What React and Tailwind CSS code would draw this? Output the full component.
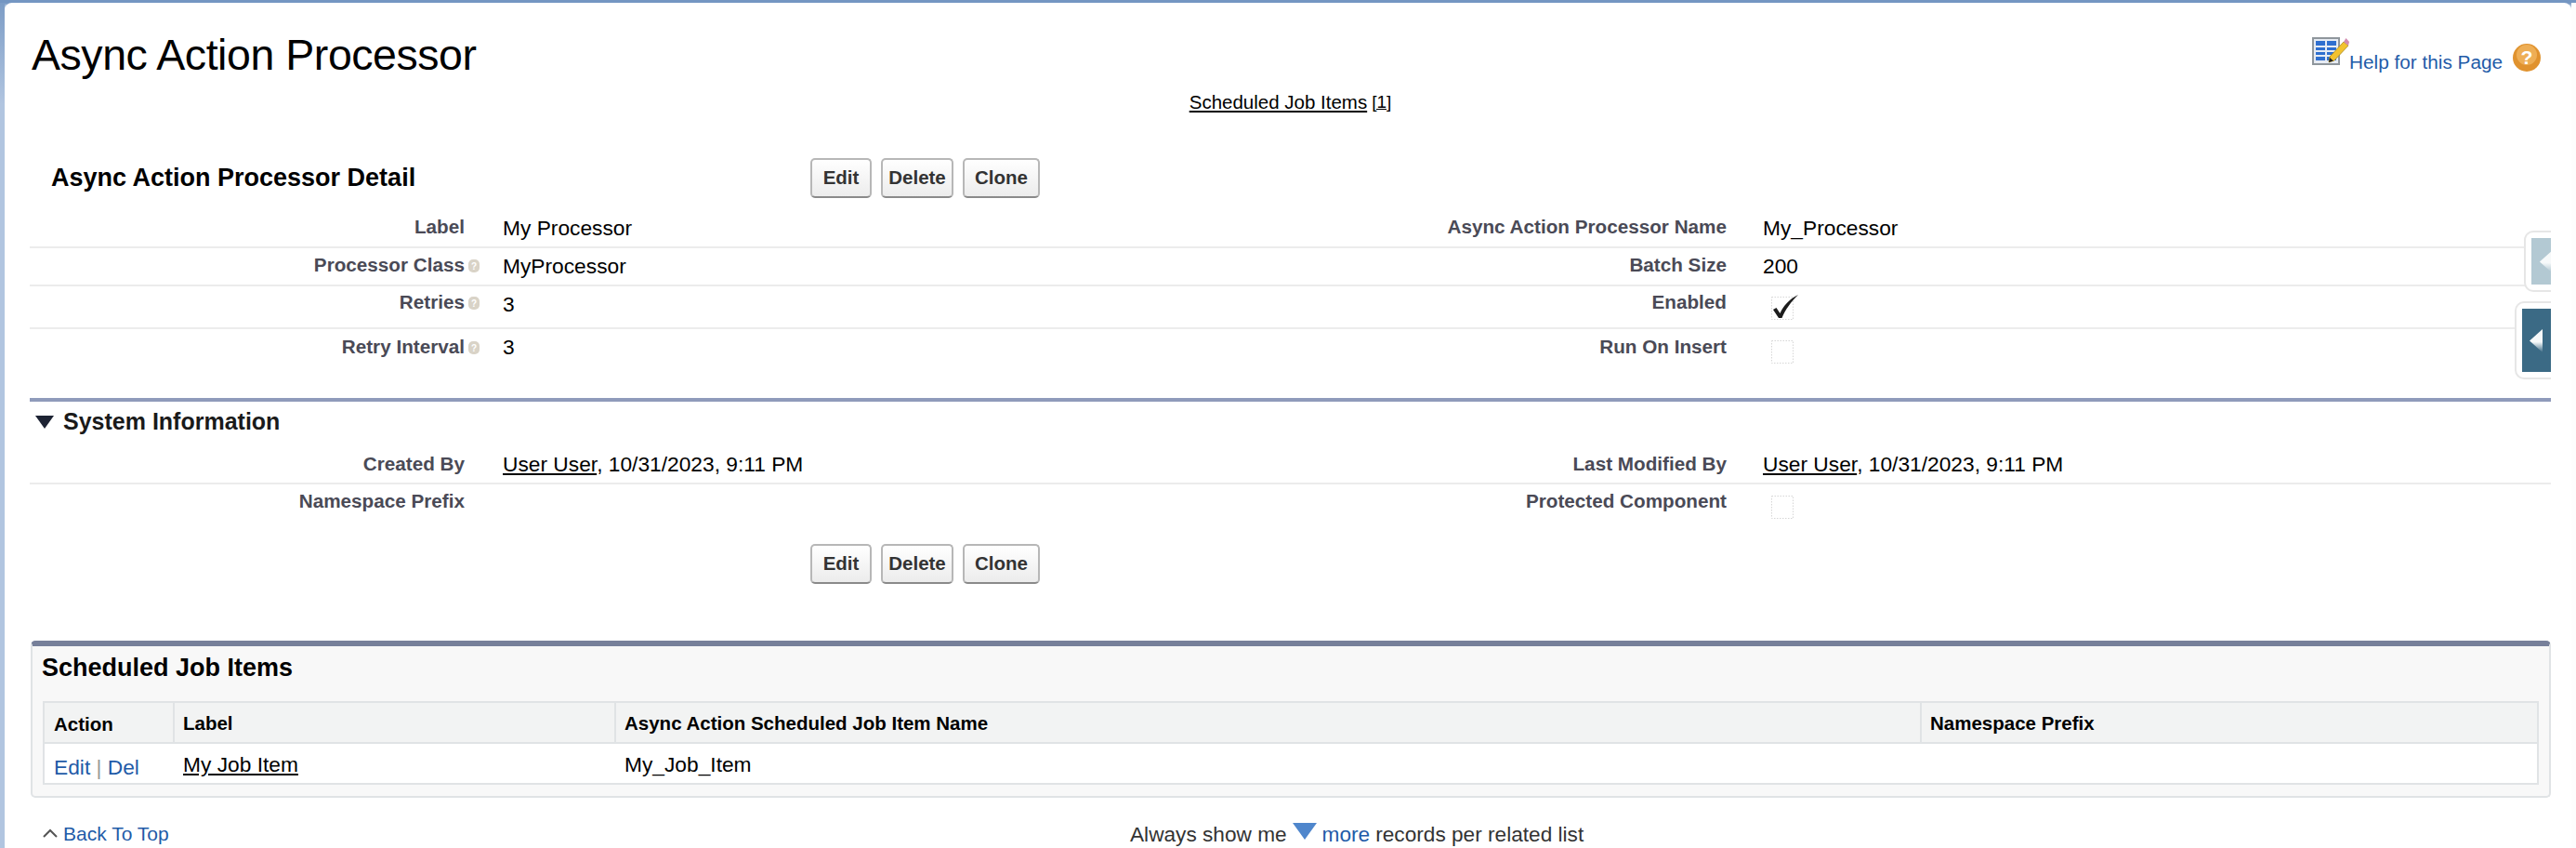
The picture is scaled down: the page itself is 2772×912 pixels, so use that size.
import React from "react";

const font = "font-['Liberation_Sans',Arial,sans-serif]";

function HelpDot() {
  return (
    <svg width="14" height="14" viewBox="0 0 14 14" className="ml-[3px] mt-[5px] shrink-0">
      <rect x="1" width="12" height="14" rx="5" fill="#d9d3c7" />
      <text x="7" y="11" textAnchor="middle" fontSize="10" fontWeight="700" fill="#fff">?</text>
    </svg>
  );
}

function Label({ text, help }) {
  return (
    <div className="flex justify-end font-bold text-[20.7px] leading-[22px] text-[#4a4a56]">
      <span>{text}</span>
      <span className="w-[18px] flex shrink-0">{help && <HelpDot />}</span>
    </div>
  );
}

function CheckImg({ checked }) {
  return (
    <svg width="34" height="30" viewBox="0 0 34 30" className={`ml-[6px] overflow-visible ${checked ? "" : "mt-[1px]"}`}>
      <rect x="3.5" y="4.5" width="23" height="24" fill="none" stroke="#d6d6d6" strokeWidth="1" strokeDasharray="1.5 1.5" />
      {checked && <path d="M5 18 L8.5 16 L12.5 22 C16 14 22 7 32 2 C24 10 18 18 14.5 27 L11 27 Z" fill="#1c1c1c" />}
    </svg>
  );
}

function Row({ left, right, line = true, h, lp = "pt-[7px]", vp = "pt-[7px]" }) {
  return (
    <div
      className={`grid grid-cols-[486px_832px_508px_887px] ${h} ${line ? "border-b-2 border-[#ececec]" : ""}`}
    >
      <div className={lp}><Label text={left.label} help={left.help} /></div>
      <div className={`pl-[23px] ${vp} text-[22.75px] leading-[24px] text-black`}>{left.value}</div>
      <div className={`${lp} flex justify-end font-bold text-[20.7px] leading-[22px] text-[#4a4a56]`}>{right.label}</div>
      <div className={`pl-[39px] ${vp} text-[22.75px] leading-[24px] text-black`}>{right.value}</div>
    </div>
  );
}

function Btn({ children, w }) {
  return (
    <button
      className={`${w} h-[43px] rounded-[5px] border-2 border-[#b7b7b7] border-b-[#8a8a8a] bg-gradient-to-b from-white to-[#ececec] text-[20.5px] font-bold text-[#333]`}
    >
      {children}
    </button>
  );
}

function Buttons() {
  return (
    <div className="flex gap-[10px]">
      <Btn w="w-[66px]">Edit</Btn>
      <Btn w="w-[78px]">Delete</Btn>
      <Btn w="w-[83px]">Clone</Btn>
    </div>
  );
}

function SideTab({ bar, outer, inner, arrow, id, tone }) {
  return (
    <div className={`${outer} flex items-center pl-[6px] rounded-l-[10px] border-2 border-r-0 border-[#e6e6e6] bg-white`}>
      <div className={`${inner} ${bar} flex items-center`}>
        <svg width="15" height="25" viewBox="0 0 15 25" className={arrow}>
          <defs>
            <linearGradient id={id} x1="0" y1="0" x2="0" y2="1">
              <stop offset="0" stopColor="#f6f9fa" />
              <stop offset="0.55" stopColor="#f6f9fa" />
              <stop offset="1" stopColor={tone} />
            </linearGradient>
          </defs>
          <path d="M15 0 L15 25 L1 12.5 Z" fill={`url(#${id})`} />
        </svg>
      </div>
    </div>
  );
}

export default function App() {
  return (
    <div className={`${font} relative h-[912px] overflow-hidden bg-[#fdfdfd]`}>
      <div className="h-[3px] bg-[#7496c2]" />
      <div className="flex h-[909px] bg-gradient-to-b from-[#7496c2] to-[#fdfdfd] to-[8px]">
        <div className="w-[5px] bg-gradient-to-b from-[#7d9dc6] to-[#b1c5e0] to-[12%]" />
        <div className="w-[2762px] rounded-t-[8px] bg-white pl-[27px] pr-[22px]">
          <div className="flex justify-between h-[72px]">
            <h1 className="pt-[26px] pl-[2px] text-[46.5px] leading-[60px] text-black tracking-[-0.45px]">Async Action Processor</h1>
            <div className="flex items-start pt-[34px] pr-[11px]">
              <svg width="42" height="34" viewBox="0 0 42 34">
                <rect x="3" y="4" width="28" height="28" fill="#e6ebf3" stroke="#8f969c" strokeWidth="2" />
                <g fill="#2f6fcf">
                  <rect x="6" y="7" width="10" height="5" />
                  <rect x="18" y="7" width="10" height="5" />
                  <rect x="6" y="14" width="10" height="3" />
                  <rect x="18" y="14" width="10" height="3" />
                  <rect x="6" y="19" width="10" height="3" />
                  <rect x="18" y="19" width="10" height="3" />
                  <rect x="6" y="24" width="10" height="4" />
                  <rect x="18" y="24" width="10" height="4" />
                </g>
                <path d="M21 24 L36 8 L41 12 L26 28 L20 30 Z" fill="#f2c230" stroke="#a88a20" strokeWidth="0.8" />
                <path d="M36 8 L38.5 4 L42 8 L41 12 Z" fill="#d28ab0" />
                <path d="M21 25 L20 30 L25 28.5 Z" fill="#222" />
              </svg>
              <span className="mt-[18px] text-[#1f5ba8] text-[20.75px] leading-[24px]">Help for this Page</span>
              <svg width="30" height="30" viewBox="0 0 30 30" className="ml-[11px] mt-[10px]">
                <circle cx="15" cy="15" r="15" fill="#e0922e" />
                <circle cx="15" cy="12" r="11" fill="#eeae55" />
                <text x="15" y="22" textAnchor="middle" fontSize="21" fontWeight="700" fill="#fff">?</text>
              </svg>
            </div>
          </div>

          <div className="h-[46px] flex justify-center pt-[23px]">
            <span className="text-[20.5px] leading-[24px] text-black underline mr-[5px]">Scheduled Job Items</span>
            <span className="text-[19px] leading-[24px] text-black underline">[1]</span>
          </div>

          <div className="flex h-[103px] pt-[49px] items-start">
            <h2 className="w-[840px] pl-[23px] text-[27px] leading-[43px] font-bold text-black">Async Action Processor Detail</h2>
            <Buttons />
          </div>

          <Row
            h="h-[43px]"
            lp="pt-[9px]"
            vp="pt-[9px]"
            left={{ label: "Label", value: "My Processor" }}
            right={{ label: "Async Action Processor Name", value: "My_Processor" }}
          />
          <Row
            h="h-[41px]"
            left={{ label: "Processor Class", help: true, value: "MyProcessor" }}
            right={{ label: "Batch Size", value: "200" }}
          />
          <Row
            h="h-[46px]"
            lp="pt-[6px]"
            left={{ label: "Retries", help: true, value: "3" }}
            right={{ label: "Enabled", value: <CheckImg checked /> }}
          />
          <Row
            h="h-[74px]"
            lp="pt-[8px]"
            line={false}
            left={{ label: "Retry Interval", help: true, value: "3" }}
            right={{ label: "Run On Insert", value: <CheckImg /> }}
          />

          <div className="h-[4px] bg-[#8f9bbb]" />
          <div className="flex items-center h-[41px] pl-[6px] pt-[2px]">
            <svg width="22" height="16" viewBox="0 0 22 16" className="mr-[8px]">
              <path d="M0 1 L20 1 L10 15 Z" fill="#1d2333" />
            </svg>
            <h3 className="text-[25px] font-bold text-[#1a1a1a]">System Information</h3>
          </div>

          <Row
            h="h-[43px] mt-[5px]"
            lp="pt-[10px]"
            vp="pt-[9px]"
            left={{ label: "Created By", value: <span><span className="underline">User User</span>, 10/31/2023, 9:11 PM</span> }}
            right={{ label: "Last Modified By", value: <span><span className="underline">User User</span>, 10/31/2023, 9:11 PM</span> }}
          />
          <Row
            h="h-[64px]"
            line={false}
            left={{ label: "Namespace Prefix", value: "" }}
            right={{ label: "Protected Component", value: <CheckImg /> }}
          />
          <div className="pl-[840px]"><Buttons /></div>

          <div className="mt-[61px] ml-[1px] h-[169px] rounded-[5px] border-2 border-t-[6px] border-[#e0e3e5] border-t-[#77809a] bg-[#f8f8f8] px-[11px]">
            <h3 className="h-[59px] pt-[7px] -ml-[1px] text-[27px] leading-[32px] font-bold text-black">Scheduled Job Items</h3>
            <div className="border-2 border-[#e0e3e5] bg-white">
              <div className="grid grid-cols-[138px_475px_1405px_1fr] h-[44px] border-b-2 border-[#e0e3e5] bg-[#f2f3f3] text-[20.5px] font-bold text-black leading-[24px]">
                <div className="pl-[10px] pt-[11px]">Action</div>
                <div className="pl-[9px] pt-[10px] border-l-2 border-[#e0e3e5]">Label</div>
                <div className="pl-[9px] pt-[10px] border-l-2 border-[#e0e3e5]">Async Action Scheduled Job Item Name</div>
                <div className="pl-[9px] pt-[10px] border-l-2 border-[#e0e3e5]">Namespace Prefix</div>
              </div>
              <div className="grid grid-cols-[138px_475px_1405px_1fr] h-[42px] text-[22.75px] leading-[24px] text-black">
                <div className="pl-[10px] pt-[13px] text-[#1f5ba8]">Edit <span className="text-[#999]">|</span> Del</div>
                <div className="pl-[11px] pt-[10px] underline">My Job Item</div>
                <div className="pl-[11px] pt-[10px]">My_Job_Item</div>
                <div />
              </div>
            </div>
          </div>

          <div className="relative flex items-start h-[54px] pt-[27px] text-[22.65px] leading-[24px]">
            <svg width="16" height="10" viewBox="0 0 16 10" className="ml-[14px] mr-[6px] mt-[6px]">
              <path d="M1 9 L8 2 L15 9" fill="none" stroke="#555" strokeWidth="2" />
            </svg>
            <span className="text-[#1f5ba8] text-[21px]">Back To Top</span>
            <div className="absolute left-[1184px] top-[27px] flex items-center text-[#333]">
              <span>Always show me</span>
              <svg width="26" height="20" viewBox="0 0 26 20" className="mx-[6px] -mt-[6px]">
                <path d="M0 1 L26 1 L13 19 Z" fill="#4f86cc" />
              </svg>
              <span className="text-[#1f5ba8]">more</span>
              <span className="ml-[6px]">records per related list</span>
            </div>
          </div>
        </div>
        <div className="w-[5px] bg-[#fdfdfd]" />
      </div>

      <div className="absolute left-[2716px] top-[248px]">
        <SideTab id="tabA" tone="#b3c9d3" bar="bg-[#b3c9d3]" arrow="ml-[8px]" outer="w-[29px] h-[66px]" inner="w-[21px] h-[50px]" />
      </div>
      <div className="absolute left-[2706px] top-[324px]">
        <SideTab id="tabB" tone="#3b6a85" bar="bg-[#3b6a85]" arrow="ml-[7px]" outer="w-[39px] h-[84px]" inner="w-[31px] h-[68px]" />
      </div>
    </div>
  );
}
